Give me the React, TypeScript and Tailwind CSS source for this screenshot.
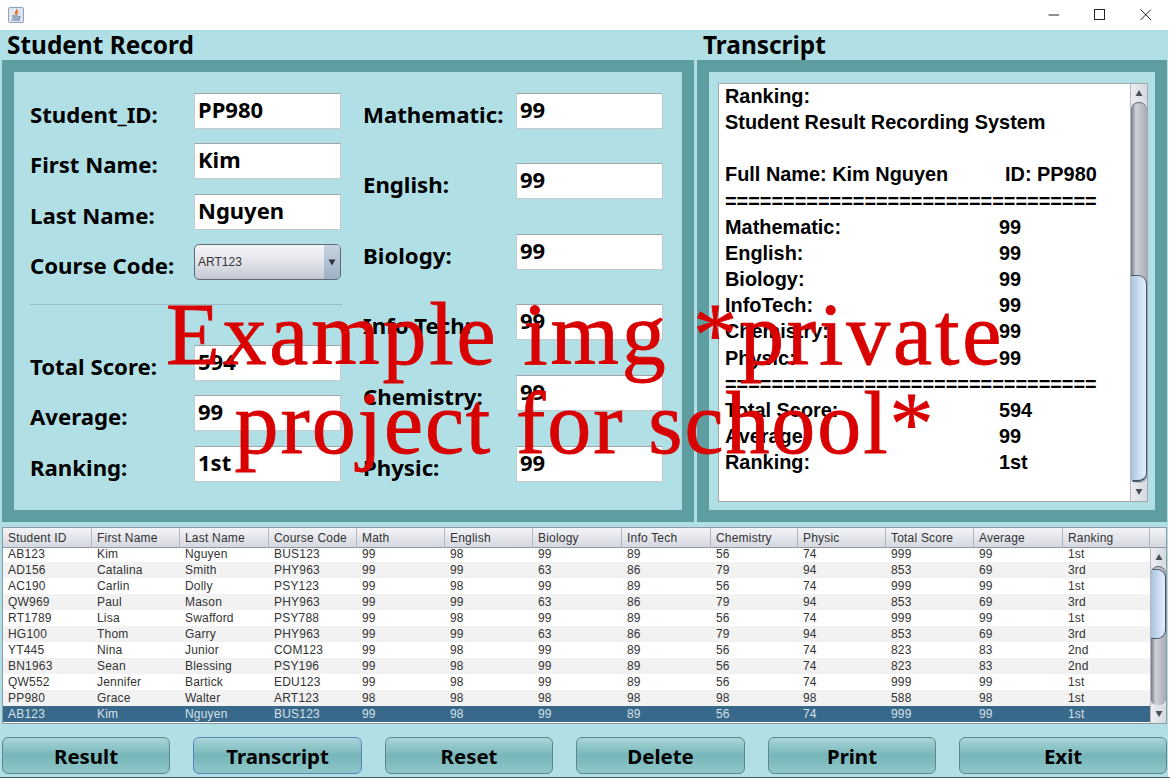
import { ReactNode } from 'react';
import clsx from 'clsx';

const COLUMNS = ['Student ID', 'First Name', 'Last Name', 'Course Code', 'Math', 'English', 'Biology', 'Info Tech', 'Chemistry', 'Physic', 'Total Score', 'Average', 'Ranking'];

const ROWS = [
  ['AB123', 'Kim', 'Nguyen', 'BUS123', '99', '98', '99', '89', '56', '74', '999', '99', '1st'],
  ['AD156', 'Catalina', 'Smith', 'PHY963', '99', '99', '63', '86', '79', '94', '853', '69', '3rd'],
  ['AC190', 'Carlin', 'Dolly', 'PSY123', '99', '98', '99', '89', '56', '74', '999', '99', '1st'],
  ['QW969', 'Paul', 'Mason', 'PHY963', '99', '99', '63', '86', '79', '94', '853', '69', '3rd'],
  ['RT1789', 'Lisa', 'Swafford', 'PSY788', '99', '98', '99', '89', '56', '74', '999', '99', '1st'],
  ['HG100', 'Thom', 'Garry', 'PHY963', '99', '99', '63', '86', '79', '94', '853', '69', '3rd'],
  ['YT445', 'Nina', 'Junior', 'COM123', '99', '98', '99', '89', '56', '74', '823', '83', '2nd'],
  ['BN1963', 'Sean', 'Blessing', 'PSY196', '99', '98', '99', '89', '56', '74', '823', '83', '2nd'],
  ['QW552', 'Jennifer', 'Bartick', 'EDU123', '99', '98', '99', '89', '56', '74', '999', '99', '1st'],
  ['PP980', 'Grace', 'Walter', 'ART123', '98', '98', '98', '98', '98', '98', '588', '98', '1st'],
  ['AB123', 'Kim', 'Nguyen', 'BUS123', '99', '98', '99', '89', '56', '74', '999', '99', '1st'],
];

const TRANSCRIPT_SCORES = [
  ['Mathematic:', '99'],
  ['English:', '99'],
  ['Biology:', '99'],
  ['InfoTech:', '99'],
  ['Chemistry:', '99'],
  ['Physic:', '99'],
];

const TRANSCRIPT_TOTALS = [
  ['Total Score:', '594'],
  ['Average:', '99'],
  ['Ranking:', '1st'],
];

const BUTTONS = [
  { label: 'Result', width: 'w-[168px]' },
  { label: 'Transcript', width: 'w-[169px]', focused: true },
  { label: 'Reset', width: 'w-[168px]' },
  { label: 'Delete', width: 'w-[169px]' },
  { label: 'Print', width: 'w-[168px]' },
  { label: 'Exit', width: 'w-[208px]' },
];

const GRID = 'grid grid-cols-[89px_88px_89px_88px_88px_88px_89px_89px_87px_88px_88px_89px_87px]';

function Field({ label, value, labelWidth, className }: { label: string; value: string; labelWidth: string; className?: string }) {
  return (
    <div className={clsx('flex h-[36px] items-start', className)}>
      <div className={clsx('pt-[5px] text-[22.2px] leading-[34px] font-bold text-black', labelWidth)}>{label}</div>
      <div className="h-[36px] w-[147px] border border-[#c6cacb] border-t-[#a3a6a7] bg-white pl-[3px] text-[22px] leading-[31px] font-bold text-black">{value}</div>
    </div>
  );
}

function ArrowButton({ up }: { up?: boolean }) {
  return (
    <div className="flex h-[18px] items-center justify-center bg-gradient-to-r from-[#eceef2] to-[#d6d9e0]">
      <svg width="8" height="8" viewBox="0 0 8 8">
        <path d={up ? 'M4 1 L7.5 7 L0.5 7 Z' : 'M0.5 1 L7.5 1 L4 7 Z'} fill="#4b4f58" />
      </svg>
    </div>
  );
}

function Scrollbar({ thumb, className }: { thumb: ReactNode; className: string }) {
  return (
    <div className={clsx('flex shrink-0 flex-col bg-[#e4e6ec]', className)}>
      <ArrowButton up />
      <div className="flex-1 overflow-hidden rounded-t-[8px] rounded-b-[6px] border-t border-[#5c6068] bg-gradient-to-r from-[#74787f] from-0% via-[#cfd1da] via-30% to-[#a9acb7] to-100%">
        {thumb}
      </div>
      <ArrowButton />
    </div>
  );
}

function JavaIcon() {
  return (
    <svg width="16" height="16" viewBox="0 0 16 16" className="ml-[8px]">
      <rect x="0.5" y="0.5" width="15" height="15" rx="1.5" fill="#dfe8f2" stroke="#8ea3bb" />
      <path d="M8.5 2 C10 4 6 5 7.5 7.5 C6.5 5.5 10.5 5 8.5 2 Z M10 4.5 C10 6 8 6 8.8 8" fill="none" stroke="#e2711d" strokeWidth="1.2" />
      <path d="M4 9 H10.5 M4.5 11 H10 M3.5 13 H12 M10.5 9.5 C13 9 13 11.5 10 11.5" fill="none" stroke="#4f6f96" strokeWidth="1" />
    </svg>
  );
}

export default function App() {
  return (
    <div className="relative flex h-[778px] w-[1170px] flex-col overflow-hidden bg-white font-['Noto_Sans',sans-serif] text-black">
      {/* Title bar */}
      <div className="flex h-[30px] items-center justify-between bg-white">
        <JavaIcon />
        <div className="mr-[18px] flex items-center gap-[34px]">
          <svg width="12" height="12" viewBox="0 0 12 12"><path d="M0.5 6 H11" stroke="#222" /></svg>
          <svg width="12" height="12" viewBox="0 0 12 12"><rect x="0.5" y="0.5" width="10" height="10" fill="none" stroke="#222" /></svg>
          <svg width="12" height="12" viewBox="0 0 12 12"><path d="M0.5 0.5 L11 11 M11 0.5 L0.5 11" stroke="#222" /></svg>
        </div>
      </div>

      <div className="mr-[2px] flex flex-1 flex-col bg-[#b0dfe5]">
        {/* Headings */}
        <div className="flex h-[30px] items-center text-[24.4px] font-bold">
          <div className="w-[703px] pl-[7px]">Student Record</div>
          <div>Transcript</div>
        </div>

        <div className="flex gap-[3px] pl-[2px]">
          {/* Student form */}
          <div className="h-[462px] w-[692px] border-[12px] border-[#5f9ea0] bg-[#b0dfe5]">
            <div className="flex pt-[21px] pl-[16px]">
              <div className="w-[333px]">
                <Field label="Student_ID:" value="PP980" labelWidth="w-[164px]" />
                <Field label="First Name:" value="Kim" labelWidth="w-[164px]" className="mt-[14px]" />
                <Field label="Last Name:" value="Nguyen" labelWidth="w-[164px]" className="mt-[15px]" />
                <div className="mt-[14px] flex h-[36px] items-start">
                  <div className="w-[164px] pt-[5px] text-[22.2px] leading-[34px] font-bold whitespace-nowrap">Course Code:</div>
                  <div className="flex h-[36px] w-[147px] overflow-hidden rounded-[5px] border border-[#5e6b75] bg-gradient-to-b from-[#f5f6f9] via-[#e2e4ea] to-[#c4c8d2]">
                    <div className="flex-1 pl-[3px] font-['Liberation_Sans',sans-serif] text-[12px] leading-[35px] text-[#333]">ART123</div>
                    <div className="flex w-[16px] items-center justify-center bg-gradient-to-b from-[#c9d4e0] to-[#9db0c4]">
                      <svg width="8" height="7" viewBox="0 0 8 7"><path d="M0.5 0.5 H7.5 L4 6.5 Z" fill="#30343b" /></svg>
                    </div>
                  </div>
                </div>
                <div className="mt-[24px] h-[2px] w-[312px] border-t border-[#98bcc2]" />
                <Field label="Total Score:" value="594" labelWidth="w-[164px]" className="mt-[39px]" />
                <Field label="Average:" value="99" labelWidth="w-[164px]" className="mt-[14px]" />
                <Field label="Ranking:" value="1st" labelWidth="w-[164px]" className="mt-[15px]" />
              </div>
              <div className="-ml-[1px]">
                <Field label="Mathematic:" value="99" labelWidth="w-[154px] pl-[1px]" />
                <Field label="English:" value="99" labelWidth="w-[154px] pl-[1px]" className="mt-[34px]" />
                <Field label="Biology:" value="99" labelWidth="w-[154px] pl-[1px]" className="mt-[35px]" />
                <Field label="Info Tech:" value="99" labelWidth="w-[154px] pl-[1px]" className="mt-[34px]" />
                <Field label="Chemistry:" value="99" labelWidth="w-[154px] pl-[1px]" className="mt-[35px]" />
                <Field label="Physic:" value="99" labelWidth="w-[154px] pl-[1px]" className="mt-[35px]" />
              </div>
            </div>
          </div>

          {/* Transcript */}
          <div className="h-[462px] w-[470px] border-[12px] border-[#5f9ea0] bg-[#b0dfe5] pt-[11px] pl-[9px]">
            <div className="flex h-[419px] w-[430px] overflow-hidden border border-[#a3a8ad] bg-white">
              <div className="-mt-[1px] flex-1 pl-[6px] font-['Liberation_Sans',sans-serif] text-[19.9px] leading-[26.15px] font-bold whitespace-nowrap">
                <div>Ranking:</div>
                <div>Student Result Recording System</div>
                <div className="h-[26.15px]" />
                <div className="flex">
                  <div className="w-[280px]">Full Name: Kim Nguyen</div>
                  <div>ID: PP980</div>
                </div>
                <div>================================</div>
                {TRANSCRIPT_SCORES.map(([name, score]) => (
                  <div key={name} className="flex">
                    <div className="w-[274px]">{name}</div>
                    <div>{score}</div>
                  </div>
                ))}
                <div>================================</div>
                {TRANSCRIPT_TOTALS.map(([name, score]) => (
                  <div key={name} className="flex">
                    <div className="w-[274px]">{name}</div>
                    <div>{score}</div>
                  </div>
                ))}
              </div>
              <Scrollbar
                className="w-[17px] border-l border-[#b5b8c0]"
                thumb={<div className="mt-[172px] h-[207px] rounded-r-[9px] border-t border-r border-b-2 border-[#47596d] bg-gradient-to-r from-[#a9c3dd] via-[#c9dcf0] to-[#e3edf8]" />}
              />
            </div>
          </div>
        </div>

        {/* Results table */}
        <div className="mt-[5px] ml-[2px] h-[197px] w-[1165px] border border-[#8f9ba3] bg-white font-['Liberation_Sans',sans-serif] text-[12px] tracking-[0.2px]">
          <div className="flex h-[20px] border-b border-[#8e99a1] bg-gradient-to-b from-[#f3f4f7] to-[#d5d8e0] leading-[20px] text-[#333]">
            <div className={clsx(GRID, 'flex-1')}>
              {COLUMNS.map((column) => (
                <div key={column} className="border-r border-[#b4b8c2] pl-[5px] whitespace-nowrap">{column}</div>
              ))}
            </div>
            <div className="w-[16px]" />
          </div>
          <div className="flex h-[175px]">
            <div className="flex-1 overflow-hidden">
              <div className="-mt-[2px]">
                {ROWS.map((row, index) => (
                  <div
                    key={index}
                    className={clsx(
                      GRID,
                      'h-[16px] leading-[17px]',
                      index === ROWS.length - 1 ? 'bg-[#39698a] text-[#d5e0e8]' : index % 2 === 1 ? 'bg-[#f2f2f2] text-[#333]' : 'bg-white text-[#333]'
                    )}
                  >
                    {row.map((cell, cellIndex) => (
                      <div key={cellIndex} className="pl-[5px]">{cell}</div>
                    ))}
                  </div>
                ))}
              </div>
            </div>
            <Scrollbar
              className="w-[16px] border-l border-[#b5b8c0]"
              thumb={<div className="mt-[2px] h-[70px] rounded-r-[9px] border-t border-r border-b border-[#47596d] bg-gradient-to-r from-[#a9c3dd] via-[#c9dcf0] to-[#e3edf8]" />}
            />
          </div>
        </div>

        {/* Action buttons */}
        <div className="mt-[13px] flex gap-[23px] pl-[2px]">
          {BUTTONS.map((button) => (
            <button
              key={button.label}
              className={clsx(
                'h-[37px] rounded-[6px] border bg-gradient-to-b from-[#a8d6d9] via-[#77b6b9] to-[#8fc7ca] text-[20.4px] leading-[34px] font-bold text-black',
                button.width,
                button.focused ? 'border-[#5b83b5]' : 'border-[#5f8689]'
              )}
            >
              {button.label}
            </button>
          ))}
        </div>
      </div>
      <div className="h-[1px] bg-[#4b5a5c]" />

      {/* Watermark over the window */}
      <div className="absolute top-[290px] left-0 w-[1170px] text-center font-['Liberation_Serif',serif] text-[88px] leading-[89px] whitespace-nowrap text-[#d90000] [-webkit-text-stroke:0.8px_#d90000]">
        <div className="tracking-[2.8px]">Example img *private</div>
        <div className="tracking-[1.9px]">project for school*</div>
      </div>
    </div>
  );
}
